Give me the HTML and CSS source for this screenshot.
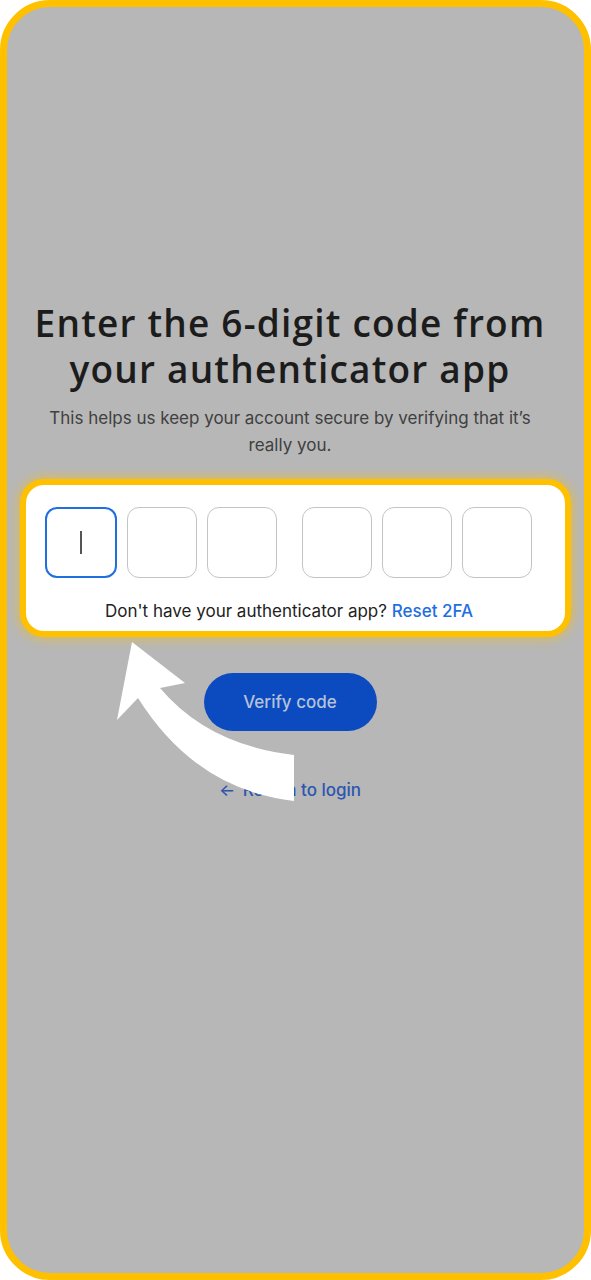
FILE: index.html
```html
<!DOCTYPE html>
<html>
<head>
<meta charset="utf-8">
<title>Two-factor verification</title>
<link rel="stylesheet" href="styles.css">
</head>
<body>

<div class="frame">
 <div class="page">
  <h1 class="title">Enter the 6-digit code from your authenticator app</h1>
  <p class="lead">This helps us keep your account secure by verifying that it’s really you.</p>

  <div class="spot">
   <div class="code">
    <span class="digit active"><i class="caret"></i></span>
    <span class="digit"></span>
    <span class="digit"></span>
    <span class="sep"></span>
    <span class="digit"></span>
    <span class="digit"></span>
    <span class="digit"></span>
   </div>
   <p class="help">Don't have your authenticator app? <a href="#">Reset 2FA</a></p>
  </div>

  <button class="verify">Verify code</button>
  <a class="back" href="#"><span class="larr">&larr;</span> Return to login</a>
 </div>

 <!-- pointer drawn over the page -->
 <svg class="pointer" width="190" height="170" viewBox="110 635 190 170">
  <path d="M294 755 Q208 745 160 688 L185 683 L132 642 L117 720 L138 698 Q196 790 294 801 Z" fill="#fff"/>
 </svg>
</div>

</body>
</html>
```

FILE: styles.css
```css
html {
 background: #fff;
}
body {
 margin: 0;
 font-family: Inter, "Noto Sans", sans-serif;
}
.frame {
 position: relative;
 box-sizing: border-box;
 width: 591px;
 height: 1280px;
 border: 7px solid #ffc000;
 border-radius: 50px;
 background: #b7b7b7;
 overflow: hidden;
}
.page {
 display: flex;
 flex-direction: column;
 align-items: center;
 padding: 293px 11px 0 0;
}
.title {
 margin: 0;
 width: 520px;
 text-align: center;
 font-family: "Open Sans", sans-serif;
 font-weight: 600;
 font-size: 37px;
 line-height: 46px;
 letter-spacing: 1.2px;
 color: #1c1c1c;
}
.lead {
 margin: 13px 0 0;
 width: 490px;
 text-align: center;
 font-size: 17px;
 line-height: 27px;
 color: #404040;
}
.spot {
 align-self: flex-start;
 margin: 26px 0 0 19px;
 box-sizing: border-box;
 width: 539px;
 padding: 22px 32px 10px 19px;
 background: #fff;
 border-radius: 18px;
 box-shadow: 0 0 0 6px #ffc000, 0 0 10px 9px rgba(255, 192, 0, 0.45);
}
.code {
 display: flex;
 gap: 10px;
}
.digit {
 display: flex;
 align-items: center;
 justify-content: center;
 box-sizing: border-box;
 width: 70px;
 height: 71px;
 border: 1px solid #c4c4c4;
 border-radius: 12px;
}
.digit.active {
 width: 72px;
 border: 2px solid #1f6fe0;
}
.caret {
 width: 1.5px;
 height: 23px;
 background: #555;
}
.sep {
 width: 5px;
}
.help {
 margin: 23px 0 0;
 text-align: center;
 font-size: 17px;
 line-height: 20px;
 color: #222;
}
.help a {
 color: #1f6fe0;
 text-decoration: none;
 font-weight: 500;
}
.verify {
 margin-top: 42px;
 width: 173px;
 height: 58px;
 border: 0;
 border-radius: 29px;
 background: #0b4bbf;
 color: #b6c2d9;
 font-family: Inter, sans-serif;
 font-size: 17px;
 font-weight: 500;
}
.back {
 margin-top: 49px;
 color: #2c56b0;
 text-decoration: none;
 font-size: 17px;
 font-weight: 500;
}
.larr {
 margin-right: 3px;
}
.pointer {
 position: absolute;
 left: 103px;
 top: 628px;
}
```
